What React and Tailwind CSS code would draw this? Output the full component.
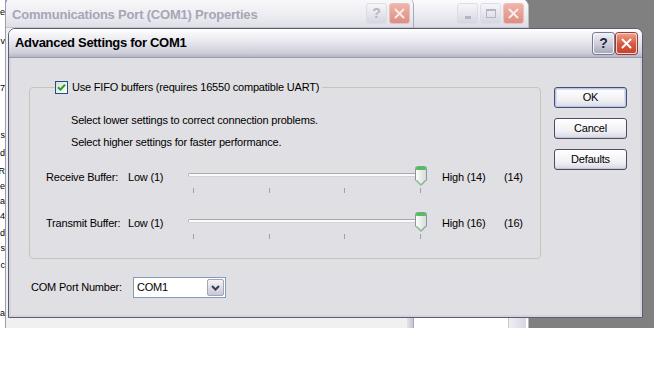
import { useState } from 'react'

const ui = "font-['Liberation_Sans',Arial,sans-serif]"

function CloseGlyph({ faded }) {
  return (
    <svg width="11" height="11" viewBox="0 0 11 11">
      <path d="M1.5 1.5 L9.5 9.5 M9.5 1.5 L1.5 9.5" stroke={faded ? '#fbeaea' : '#ffffff'} strokeWidth="2" strokeLinecap="round" />
    </svg>
  )
}

function TitleBtn({ kind, faded }) {
  if (kind === 'close') {
    return (
      <div
        className={
          'w-[21px] h-[21px] rounded-[3px] border flex items-center justify-center ' +
          (faded
            ? 'border-[#e8c0bc] bg-[linear-gradient(#f0b4a8,#dc8e84)]'
            : 'border-[#f3d4cc] bg-[linear-gradient(#ec9c86,#d6563e_55%,#c84632)] shadow-[0_0_0_1px_#9e3c30]')
        }
      >
        <CloseGlyph faded={faded} />
      </div>
    )
  }
  const glyph =
    kind === 'help' ? (
      <span className={'text-[14px] font-bold leading-none ' + (faded ? 'text-[#b6b6c4]' : 'text-[#262636]')}>?</span>
    ) : kind === 'min' ? (
      <span className="mt-[9px] w-[6px] h-[3px] bg-[#b4b4c2]" />
    ) : (
      <span className="w-[10px] h-[9px] border-[1px] border-t-[2px] border-[#b4b4c2]" />
    )
  return (
    <div
      className={
        'w-[21px] h-[21px] rounded-[3px] border flex items-center justify-center ' +
        (faded
          ? 'border-[#dcdce6] bg-[linear-gradient(#f6f6fa,#d6d6e0)]'
          : 'border-[#f2f2f6] bg-[linear-gradient(#eeeef4,#c8c8d8_60%,#a8a8bc)] shadow-[0_0_0_1px_#7a7a92]')
      }
    >
      {glyph}
    </div>
  )
}

function Button({ children, isDefault }) {
  return (
    <button
      className={
        'w-[73px] h-[21px] rounded-[3px] border border-[#4c4c66] text-[11px] tracking-[-0.2px] text-black ' +
        'bg-[linear-gradient(#ffffff,#f2f2f6_60%,#d8d8e2)] ' +
        (isDefault ? 'shadow-[inset_0_0_0_1px_#b8c8ec,inset_0_0_0_2px_#d6def4]' : 'shadow-[inset_0_-1px_0_#c8c8d4]')
      }
    >
      {children}
    </button>
  )
}

function Slider() {
  const ticks = [5, 81, 156, 232]
  return (
    <svg width="244" height="30" viewBox="0 0 244 30" className="shrink-0">
      <defs>
        <linearGradient id="thumbBody" x1="0" y1="0" x2="1" y2="0">
          <stop offset="0" stopColor="#ffffff" />
          <stop offset="1" stopColor="#d8d8dc" />
        </linearGradient>
      </defs>
      <rect x="0.5" y="8.5" width="236" height="3" rx="1" fill="#f8f8f6" stroke="#a9a8ad" />
      <line x1="1" y1="11" x2="236" y2="11" stroke="#ffffff" />
      {ticks.map((t) => (
        <line key={t} x1={t + 0.5} y1="23" x2={t + 0.5} y2="28" stroke="#a2a2a6" />
      ))}
      <path d="M227.5 3.5 Q227.5 1.5 229.5 1.5 L236.5 1.5 Q238.5 1.5 238.5 3.5 L238.5 15 L233 20.5 L227.5 15 Z" fill="url(#thumbBody)" stroke="#8b95a0" />
      <rect x="228" y="2" width="10" height="3" rx="1" fill="#4cc35a" />
      <path d="M228.5 15 L233 19.5 L237.5 15" fill="none" stroke="#5cc46a" />
    </svg>
  )
}

function SliderRow({ label, high, value }) {
  return (
    <div className="flex items-start h-[30px]">
      <span className="w-[82px] mt-[6px] leading-[13px]">{label}</span>
      <span className="w-[60px] mt-[6px] leading-[13px]">Low (1)</span>
      <Slider />
      <span className="ml-[10px] w-[62px] mt-[6px] leading-[13px]">{high}</span>
      <span className="mt-[6px] leading-[13px]">{value}</span>
    </div>
  )
}

function LeftScraps() {
  const bits = [
    [7, 'e'], [36, 'v'], [83, '7'], [130, 's'], [148, 'd'], [166, 'R'], [181, 'e'],
    [196, 'a'], [211, '4'], [228, 'd'], [243, 's'], [260, 'c'], [308, 'a'],
  ]
  return (
    <div className="absolute left-0 top-0 w-[6px] h-[328px] bg-white overflow-hidden border-r border-[#9c9cac]">
      {bits.map(([y, c]) => (
        <span key={y} className="absolute right-[0px] text-[9px] leading-[11px] text-black" style={{ top: y }}>
          {c}
        </span>
      ))}
    </div>
  )
}

export default function App() {
  const [fifo, setFifo] = useState(true)

  return (
    <div className={'w-[654px] h-[384px] bg-white overflow-hidden ' + ui}>
      <div className="relative w-[654px] h-[328px] overflow-hidden bg-[#808080]">
        {/* window behind, with min / max / close */}
        <div className="absolute left-[300px] top-[-1px] w-[229px] h-[345px] bg-white rounded-tr-[8px] border-r border-[#b8b8c8]">
          <div className="h-[29px] rounded-tr-[8px] bg-[linear-gradient(#fdfdfe,#ececf2_55%,#dcdce6)] border-b border-[#c4c4d0] flex items-center justify-end pr-[4px] gap-[2px]">
            <TitleBtn kind="min" faded />
            <TitleBtn kind="max" faded />
            <TitleBtn kind="close" faded />
          </div>
          <div className="absolute right-[2px] top-[29px] bottom-0 w-[18px] bg-[linear-gradient(90deg,#eeeef4,#d8d8e4)] border-l border-[#c8c8d4]" />
        </div>

        {/* Communications Port (COM1) Properties */}
        <div className="absolute left-[5px] top-[-3px] w-[409px] h-[345px] bg-[#f0f0f0] rounded-t-[8px] border-x border-[#a8a8b8]">
          <div className="h-[31px] rounded-t-[8px] bg-[linear-gradient(#fafafc,#eeeef3_55%,#dfdfe8)] border-b border-[#c4c4d0] flex items-center pl-[6px] pr-[3px] pt-[2px]">
            <span className="flex-1 mt-[4px] text-[13px] font-bold tracking-[-0.2px] text-[#a6a6b6]">
              Communications Port (COM1) Properties
            </span>
            <div className="flex gap-[2px]">
              <TitleBtn kind="help" faded />
              <TitleBtn kind="close" faded />
            </div>
          </div>
          <div className="absolute right-0 top-[31px] bottom-0 w-[6px] bg-[linear-gradient(90deg,#e4e4ec,#c4c4d2)]" />
        </div>

        <LeftScraps />

        {/* Advanced Settings for COM1 */}
        <div className="absolute left-[8px] top-[28px] w-[635px] h-[290px] rounded-t-[7px] border border-[#5c5c70] bg-[#e0dfe3] flex flex-col text-[11px] tracking-[-0.2px] text-black">
          <div className="h-[29px] shrink-0 rounded-t-[6px] bg-[linear-gradient(#ffffff,#eaeaf0_40%,#cfcfdc_85%,#b4b4c6)] border-b border-[#9a9aae] flex items-center pl-[6px] pr-[5px]">
            <span className="flex-1 text-[13px] font-bold tracking-[-0.3px] text-black">Advanced Settings for COM1</span>
            <div className="flex gap-[2px]">
              <TitleBtn kind="help" />
              <TitleBtn kind="close" />
            </div>
          </div>

          <div className="flex-1 flex border-x-[2px] border-b-[2px] border-[#d4d4de] pl-[18px] pt-[23px]">
            <div className="w-[512px] flex flex-col">
              <fieldset className="border border-[#c5c5bb] rounded-[4px] pb-[17px]">
                <legend className="ml-[25px] pr-[3px] flex items-center h-[13px] leading-[13px]">
                  <button
                    onClick={() => setFifo(!fifo)}
                    className="w-[13px] h-[13px] border border-[#1c5180] bg-[linear-gradient(135deg,#dcdcd6,#ffffff)] flex items-center justify-center mr-[4px]"
                  >
                    {fifo && (
                      <svg width="9" height="9" viewBox="0 0 9 9">
                        <path d="M1 4.2 L3.4 6.6 L8 1.8" fill="none" stroke="#21a121" strokeWidth="2" />
                      </svg>
                    )}
                  </button>
                  Use FIFO buffers (requires 16550 compatible UART)
                </legend>
                <p className="ml-[41px] mt-[20px] leading-[13px]">Select lower settings to correct connection problems.</p>
                <p className="ml-[41px] mt-[9px] leading-[13px]">Select higher settings for faster performance.</p>
                <div className="ml-[16px] mt-[16px] flex flex-col gap-[16px]">
                  <SliderRow label="Receive Buffer:" high="High (14)" value="(14)" />
                  <SliderRow label="Transmit Buffer:" high="High (16)" value="(16)" />
                </div>
              </fieldset>

              <div className="flex items-center mt-[18px] ml-[2px]">
                <span className="w-[102px]">COM Port Number:</span>
                <div className="w-[93px] h-[21px] bg-white border border-[#7f9db9] flex items-center">
                  <span className="flex-1 pl-[3px]">COM1</span>
                  <div className="w-[17px] h-[17px] mr-[1px] rounded-[2px] border border-[#a4a4b8] bg-[linear-gradient(#f4f4f8,#c8c8d6)] flex items-center justify-center">
                    <svg width="9" height="6" viewBox="0 0 9 6">
                      <path d="M1 1 L4.5 4.5 L8 1" fill="none" stroke="#3c3c50" strokeWidth="2" />
                    </svg>
                  </div>
                </div>
              </div>
            </div>

            <div className="ml-[13px] mt-[6px] flex flex-col gap-[10px]">
              <Button isDefault>OK</Button>
              <Button>Cancel</Button>
              <Button>Defaults</Button>
            </div>
          </div>
        </div>
      </div>
    </div>
  )
}
